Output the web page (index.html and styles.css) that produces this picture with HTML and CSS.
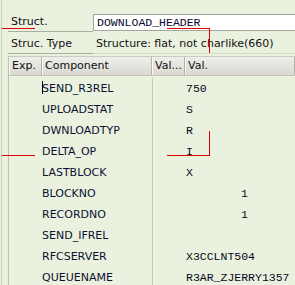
FILE: index.html
```html
<!DOCTYPE html>
<html lang="en">
<head>
    <meta charset="UTF-8">
    <meta name="viewport" content="width=device-width, initial-scale=1.0">
    <title>Structure</title>
    <link rel="stylesheet" href="styles.css">
</head>
<body>
    <div class="screen">
        <div class="form-row first">
            <div class="lbl">Struct.</div>
            <div class="input">DOWNLOAD_HEADER</div>
        </div>
        <div class="form-row">
            <div class="lbl">Struc. Type</div>
            <div class="val">Structure: flat, not charlike(660)</div>
        </div>

        <div class="grid">
            <div class="grid-head">
                <div class="hc">Exp.</div>
                <div class="hc">Component</div>
                <div class="hc">Val...</div>
                <div class="hc">Val.</div>
            </div>
            <div class="grid-body">
                <div class="gr"><div></div><div class="comp"><span class="caret"></span>SEND_R3REL</div><div class="sep"></div><div class="mono">750</div></div>
                <div class="gr"><div></div><div class="comp">UPLOADSTAT</div><div class="sep"></div><div class="mono">S</div></div>
                <div class="gr"><div></div><div class="comp">DWNLOADTYP</div><div class="sep"></div><div class="mono">R</div></div>
                <div class="gr"><div></div><div class="comp">DELTA_OP</div><div class="sep"></div><div class="mono">I</div></div>
                <div class="gr"><div></div><div class="comp">LASTBLOCK</div><div class="sep"></div><div class="mono">X</div></div>
                <div class="gr"><div></div><div class="comp">BLOCKNO</div><div class="sep"></div><div class="mono num">1</div></div>
                <div class="gr"><div></div><div class="comp">RECORDNO</div><div class="sep"></div><div class="mono num">1</div></div>
                <div class="gr"><div></div><div class="comp">SEND_IFREL</div><div class="sep"></div><div class="mono"></div></div>
                <div class="gr"><div></div><div class="comp">RFCSERVER</div><div class="sep"></div><div class="mono">X3CCLNT504</div></div>
                <div class="gr"><div></div><div class="comp">QUEUENAME</div><div class="sep"></div><div class="mono">R3AR_ZJERRY1357</div></div>
            </div>
        </div>

        <!-- red markers drawn over the screenshot -->
        <div class="mark" style="left:0;top:28px;width:33px;height:1px"></div>
        <div class="mark" style="left:165px;top:28px;width:43px;height:1px"></div>
        <div class="mark" style="left:207px;top:28px;width:1px;height:25px"></div>
        <div class="mark" style="left:0;top:155px;width:33px;height:1px"></div>
        <div class="mark" style="left:165px;top:155px;width:43px;height:1px"></div>
        <div class="mark" style="left:207px;top:131px;width:1px;height:25px"></div>
    </div>
</body>
</html>
```

FILE: styles.css
```css
*{
    padding: 0;
    margin: 0;
    box-sizing: border-box;
}
body{
    background-color: #eaf2df;
    font-family: "DejaVu Sans", sans-serif;
    font-size: 11px;
    color: #111;
    overflow: hidden;
}
.screen{
    position: relative;
    height: 285px;
    padding-left: 6px;
    border-left: 1px solid #c6d0b8;
    margin-left: 1px;
}
.form-row{
    display: flex;
    align-items: flex-end;
    height: 22px;
}
.form-row.first{
    padding-top: 11px;
    height: 32px;
}
.lbl{
    width: 85px;
    height: 20px;
    line-height: 20px;
    padding-left: 3px;
    border-bottom: 1px solid #a9ae9f;
}
.input{
    flex: 1;
    height: 17px;
    margin-bottom: 1px;
    line-height: 15px;
    padding-left: 3px;
    background: #fff;
    border: 1px solid #a3a99a;
    border-right: none;
    font-family: "Liberation Mono", monospace;
    font-size: 11.5px;
    color: #0a0a30;
}
.val{
    flex: 1;
    height: 20px;
    line-height: 20px;
    padding-left: 3px;
    border-bottom: 1px solid #cfe2bd;
}
.grid{
    margin-top: 2px;
    border-left: 1px solid #b9c3ad;
}
.grid-head, .gr{
    display: grid;
    grid-template-columns: 33px 110px 33px 1fr;
}
.grid-head{
    height: 20px;
    background: linear-gradient(#efefea, #d9d9d2);
    border-top: 1px solid #c9ccc1;
    border-bottom: 1px solid #c3c5bb;
}
.hc{
    line-height: 18px;
    padding-left: 3px;
    border-right: 1px solid #b3b5ab;
    box-shadow: inset 1px 0 #f8f8f4;
    white-space: nowrap;
    overflow: hidden;
}
.grid-body{
    padding-top: 2px;
}
.gr{
    height: 21px;
    line-height: 21px;
}
.comp{
    padding-left: 0;
    color: #0c1030;
}
.sep{
    border-left: 1px solid #c4cbb9;
}
.mono{
    font-family: "Liberation Mono", monospace;
    font-size: 11.5px;
    color: #08081a;
    padding-left: 1px;
    white-space: nowrap;
}
.mono.num{
    padding-left: 56px;
}
.caret{
    display: inline-block;
    width: 1px;
    height: 13px;
    background: #000;
    vertical-align: -2px;
    margin-right: -1px;
}
.mark{
    position: absolute;
    background: #e10000;
}
```
